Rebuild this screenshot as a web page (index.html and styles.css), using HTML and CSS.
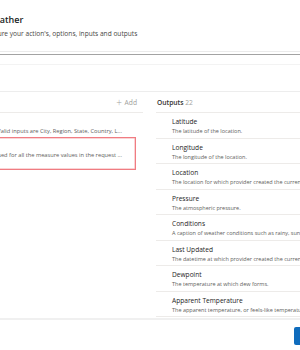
FILE: index.html
```html
<!DOCTYPE html>
<html lang="en">
<head>
    <meta charset="UTF-8">
    <meta name="viewport" content="width=device-width, initial-scale=1.0">
    <title>Weather action</title>
    <link rel="stylesheet" href="styles.css">
</head>
<body>
    <div id="page">
        <div class="header">
            <div class="title">Weather</div>
            <div class="subtitle">Configure your action's, options, inputs and outputs</div>
        </div>
        <div class="rule-light"></div>
        <div class="rule-dark"></div>
        <div class="tabs"></div>

        <div class="columns">
            <div class="inputs">
                <div class="panel-head">
                    <span class="head-label">Inputs <span class="count">2</span></span>
                    <span class="add"><span class="plus">+</span> Add</span>
                </div>
                <div class="input-row">
                    <span class="input-desc">Valid inputs are City, Region, State, Country, L...</span>
                </div>
                <div class="input-row error">
                    <span class="input-desc">The units used for all the measure values in the request ...</span>
                </div>
            </div>

            <div class="outputs">
                <div class="panel-head">
                    <span class="head-label">Outputs <span class="count">22</span></span>
                </div>
                <div class="output-list" id="outputList"></div>
            </div>
        </div>

        <div class="footer">
            <button class="primary">Save</button>
        </div>
    </div>

    <script>
        const outputs = [
            ['Latitude', 'The latitude of the location.'],
            ['Longitude', 'The longitude of the location.'],
            ['Location', 'The location for which provider created the current conditions.'],
            ['Pressure', 'The atmospheric pressure.'],
            ['Conditions', 'A caption of weather conditions such as rainy, sunny, etc.'],
            ['Last Updated', 'The datetime at which provider created the current conditions.'],
            ['Dewpoint', 'The temperature at which dew forms.'],
            ['Apparent Temperature', 'The apparent temperature, or feels-like temperature.'],
            ['Humidity', 'The relative humidity.']
        ];

        const list = document.getElementById('outputList');
        outputs.forEach(([name, desc]) => {
            const item = document.createElement('div');
            item.className = 'output-item';
            item.innerHTML = `<div class="output-name">${name}</div><div class="output-desc">${desc}</div>`;
            list.appendChild(item);
        });
    </script>
</body>
</html>
```

FILE: styles.css
```css
body {
    margin: 0;
    background-color: #fff;
    font-family: "Open Sans", "Noto Sans", sans-serif;
    color: #323130;
}
#page {
    width: 300px;
    height: 350px;
    overflow: hidden;
    display: flex;
    flex-direction: column;
}
.header {
    margin-left: -22px;
    padding-top: 13px;
    height: 51px;
    box-sizing: border-box;
    white-space: nowrap;
}
.title {
    padding-left: 8px;
    font-size: 9px;
    font-weight: 600;
    line-height: 13px;
    color: #201f1e;
}
.subtitle {
    font-size: 6.6px;
    line-height: 9px;
    margin-top: 3px;
    color: #484644;
}
.rule-light {
    height: 1px;
    background-color: #ebebeb;
    flex-shrink: 0;
}
.rule-dark {
    margin-top: 2px;
    height: 1px;
    background-color: #a3a3a3;
    flex-shrink: 0;
}
.tabs {
    height: 28px;
    margin-top: 9px;
    border-top: 1px solid #f3f3f3;
    border-bottom: 1px solid #ededed;
    box-sizing: border-box;
    flex-shrink: 0;
}
.columns {
    display: flex;
    gap: 13px;
    height: 226px;
    flex-shrink: 0;
}
.inputs {
    width: 183px;
    margin-left: -40px;
    flex-shrink: 0;
}
.outputs {
    flex: 1;
    min-width: 0;
    overflow: hidden;
}
.panel-head {
    height: 20px;
    border-bottom: 1px solid #edebe9;
    display: flex;
    align-items: center;
    justify-content: space-between;
    font-size: 6.7px;
}
.inputs .head-label {
    visibility: hidden;
}
.head-label {
    font-weight: 600;
    padding-left: 1px;
}
.count {
    font-weight: 400;
    color: #a19f9d;
}
.add {
    color: #a19f9d;
    padding-right: 6px;
}
.plus {
    font-size: 10px;
    font-weight: 300;
    vertical-align: -1px;
    margin-right: 1px;
}
.input-row {
    height: 24px;
    display: flex;
    align-items: flex-end;
    justify-content: flex-end;
    padding: 0 21px 2px 0;
    box-sizing: border-box;
    font-size: 5.7px;
    color: #605e5c;
    white-space: nowrap;
}
.input-row.error {
    height: 33px;
    margin-right: 7px;
    padding: 0 13px 10px 0;
    border: 1px solid #f07c82;
    box-shadow: inset 0 0 0 0.5px #f6a9ad;
}
.output-item {
    height: 25.5px;
    border-bottom: 1px solid #edebe9;
    box-sizing: border-box;
    padding: 4px 0 0 16px;
    white-space: nowrap;
}
.output-name {
    font-size: 6.6px;
    line-height: 10px;
    color: #252423;
}
.output-desc {
    font-size: 5.5px;
    line-height: 9px;
    color: #605e5c;
}
.footer {
    border-top: 2px solid #f0f0f0;
    padding-top: 7px;
    display: flex;
    justify-content: flex-end;
    margin-right: -40px;
}
.primary {
    width: 46px;
    height: 18px;
    border: none;
    border-radius: 2px;
    background-color: #0f6cbd;
    color: #fff;
    font-family: inherit;
    font-size: 7px;
    font-weight: 600;
}
```
